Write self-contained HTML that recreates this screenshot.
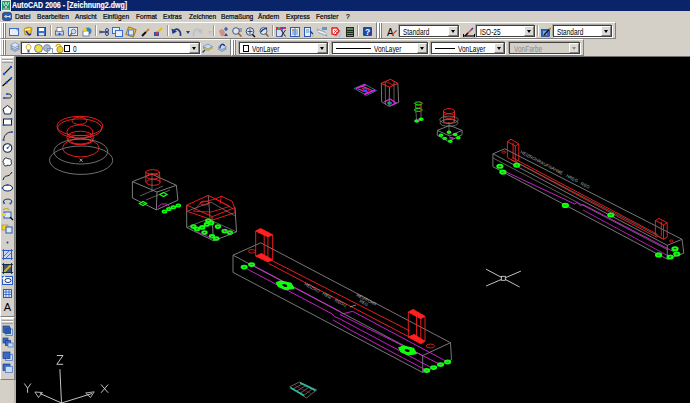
<!DOCTYPE html>
<html><head><meta charset="utf-8">
<style>
*{margin:0;padding:0;box-sizing:border-box}
html,body{width:690px;height:403px;overflow:hidden;background:#d4d0c8;font-family:"Liberation Sans",sans-serif;position:relative}
.a{position:absolute}
svg{overflow:visible}
#title{left:0;top:0;width:690px;height:11px;background:#0a246a}
#title .t{left:12px;top:0px;color:#fff;font-weight:bold;-webkit-text-stroke:0.15px #fff;font-size:9px;line-height:11px;white-space:nowrap;transform-origin:0 0;transform:scaleX(0.78)}
#menu{left:0;top:11px;width:690px;height:11px;background:#d4d0c8}
.m{top:1px;font-size:7.5px;line-height:10px;color:#000;-webkit-text-stroke:0.2px #000;white-space:nowrap;transform-origin:0 0;transform:scaleX(0.88)}
.tb{background:#d4d0c8;border-top:1px solid #fff;border-left:1px solid #fff;border-right:1px solid #808080;border-bottom:1px solid #808080}
.grip{width:2px;border-left:1px solid #fff;border-right:1px solid #808080}
.sep{width:2px;border-left:1px solid #9a988f;border-right:1px solid #fff}
.cb{background:#fff;border:1px solid #404040;box-shadow:1px 1px 0 #fff,-1px -1px 0 #a8a6a0}
.cbt{font-size:9px;line-height:10px;color:#000;white-space:nowrap;transform-origin:0 0;transform:scaleX(0.72)}
.arr{background:#dcdad4;border-top:1px solid #fff;border-left:1px solid #fff;border-right:1px solid #808080;border-bottom:1px solid #808080}
.arr i{position:absolute;left:2px;top:2.5px;width:0;height:0;border-left:2.5px solid transparent;border-right:2.5px solid transparent;border-top:3px solid #000}
#canvas{left:16px;top:56px;width:674px;height:347px;background:#000}
</style></head><body>
<div id="title" class="a">
<svg class="a" style="left:1px;top:0px" width="10" height="11" viewBox="0 0 10 11"><rect x="0.5" y="0.5" width="9" height="10" fill="#1a9a6a" stroke="#d8f0e8" stroke-width="1"/><path d="M2 2 L3.5 6 L5 2 M5 2 L6.5 6 L8 2" stroke="#c8f0d8" stroke-width="0.9" fill="none"/><circle cx="5" cy="7" r="1.5" fill="#e0e0e0" stroke="#404040" stroke-width="0.6"/><path d="M2 9 L8 9" stroke="#c8f0d8" stroke-width="0.8"/></svg>
<div class="a t">AutoCAD 2006 - [Zeichnung2.dwg]</div>
</div>
<div id="menu" class="a">
<svg class="a" style="left:2px;top:1px" width="10" height="9" viewBox="0 0 10 9"><rect x="0.5" y="0.5" width="9" height="8" rx="2" fill="#1a5ac0" stroke="#3a3a5a" stroke-width="0.8"/><path d="M2.5 4.5 L8 4.5" stroke="#d0e8ff" stroke-width="1.1"/><path d="M2 4.5 L4.5 2.5 L4.5 6.5 Z" fill="#e8c890"/><path d="M8 3 L8 6" stroke="#fff" stroke-width="0.8"/></svg>
<div class="a m" style="left:15px">Datei</div>
<div class="a m" style="left:37px">Bearbeiten</div>
<div class="a m" style="left:75px">Ansicht</div>
<div class="a m" style="left:103px">Einfügen</div>
<div class="a m" style="left:136px">Format</div>
<div class="a m" style="left:163px">Extras</div>
<div class="a m" style="left:189px">Zeichnen</div>
<div class="a m" style="left:221px">Bemaßung</div>
<div class="a m" style="left:258px">Ändern</div>
<div class="a m" style="left:286px">Express</div>
<div class="a m" style="left:316px">Fenster</div>
<div class="a m" style="left:346px">?</div>
</div>
<div class="a tb" style="left:0px;top:22px;width:377px;height:17px"></div>
<div class="a grip" style="left:2px;top:23px;height:15px"></div><div class="a grip" style="left:4px;top:23px;height:15px"></div>
<div class="a sep" style="left:50px;top:25px;height:11px"></div>
<div class="a sep" style="left:95px;top:25px;height:11px"></div>
<div class="a sep" style="left:167px;top:25px;height:11px"></div>
<div class="a sep" style="left:213px;top:25px;height:11px"></div>
<div class="a sep" style="left:272px;top:25px;height:11px"></div>
<div class="a sep" style="left:357px;top:25px;height:11px"></div>
<svg class="a" style="left:9px;top:28px" width="10" height="8" viewBox="0 0 10 8"><rect x="0.5" y="0.5" width="9" height="7" fill="#e8eef8" stroke="#3a6ec8"/><path d="M7 0.5 L9.5 3" stroke="#3a6ec8" fill="none"/></svg>
<svg class="a" style="left:23px;top:26px" width="10" height="10" viewBox="0 0 10 10"><path d="M1 3 L5 1 L9 2 L8 8 L2 9 Z" fill="#f0c030" stroke="#a08020" stroke-width="0.7"/><path d="M3 5 L6 9 L8 8" stroke="#1a3a9a" stroke-width="1.5" fill="none"/><path d="M2 4 L7 3" stroke="#fff" stroke-width="1"/></svg>
<svg class="a" style="left:37px;top:27px" width="9" height="9" viewBox="0 0 9 9"><rect x="0.5" y="0.5" width="8" height="8" fill="#3a70c8" stroke="#1a4a98"/><rect x="2" y="1" width="5" height="3" fill="#fff"/><rect x="2" y="6" width="5" height="2.5" fill="#dde"/></svg>
<svg class="a" style="left:55px;top:27px" width="9" height="9" viewBox="0 0 9 9"><rect x="0.5" y="4" width="8" height="4" fill="#c8d4e8" stroke="#3a5a98" stroke-width="0.8"/><rect x="2" y="0.5" width="5" height="4" fill="#fff" stroke="#555" stroke-width="0.6"/><circle cx="4.5" cy="7" r="1.2" fill="#2a5ab0"/></svg>
<svg class="a" style="left:68px;top:27px" width="10" height="10" viewBox="0 0 10 10"><rect x="0.5" y="0.5" width="9" height="8" fill="#e8eef8" stroke="#3a6ec8"/><circle cx="5.5" cy="4.5" r="2.3" fill="#cde" stroke="#3a6ec8" stroke-width="0.8"/><path d="M4 6 L1.5 9.5" stroke="#a05a20" stroke-width="1.3"/></svg>
<svg class="a" style="left:82px;top:27px" width="10" height="10" viewBox="0 0 10 10"><circle cx="6" cy="4" r="3.5" fill="#2a8ad0"/><rect x="1" y="4" width="6" height="5" fill="#fff" stroke="#3a5a98" stroke-width="0.7"/><circle cx="3" cy="3" r="2" fill="#f0d020"/></svg>
<svg class="a" style="left:99px;top:28px" width="10" height="8" viewBox="0 0 10 8"><path d="M0 3 L10 5 M0 5 L10 3" stroke="#2a3a6a" stroke-width="0.9"/><circle cx="8" cy="2" r="1.5" fill="none" stroke="#2a4a9a"/><circle cx="8" cy="6" r="1.5" fill="none" stroke="#2a4a9a"/></svg>
<svg class="a" style="left:112px;top:27px" width="11" height="10" viewBox="0 0 11 10"><rect x="0.5" y="0.5" width="7" height="6" fill="#e8eef8" stroke="#3a6ec8"/><rect x="3.5" y="3.5" width="7" height="6" fill="#e8eef8" stroke="#3a6ec8"/></svg>
<svg class="a" style="left:126px;top:27px" width="10" height="10" viewBox="0 0 10 10"><rect x="1" y="1" width="8" height="8" fill="#f0c040" stroke="#806020" stroke-width="0.7" transform="rotate(20 5 5)"/><rect x="2.5" y="3" width="5" height="5" fill="#dde8f8" stroke="#3a6ec8" stroke-width="0.8"/></svg>
<svg class="a" style="left:141px;top:28px" width="9" height="9" viewBox="0 0 9 9"><path d="M1 8 L5 4" stroke="#101010" stroke-width="2"/><path d="M5 4 L8 1" stroke="#c07020" stroke-width="1.6"/></svg>
<svg class="a" style="left:153px;top:26px" width="11" height="11" viewBox="0 0 11 11"><path d="M2 9 L9 2" stroke="#e0c020" stroke-width="2"/><rect x="1" y="6" width="5" height="4" fill="#2a5ab0"/><circle cx="4" cy="7" r="1.5" fill="#e03030"/></svg>
<svg class="a" style="left:171px;top:27px" width="11" height="10" viewBox="0 0 11 10"><path d="M9.5 9 C10 3 6 0.5 3 3.5" stroke="#1a3a8a" stroke-width="1.8" fill="none"/><path d="M0.5 1.5 L1.5 7 L6 4.5 Z" fill="#1a3a8a"/></svg>
<svg class="a" style="left:186px;top:31px" width="4" height="3" viewBox="0 0 4 3"><path d="M0 0 L4 0 L2 3 Z" fill="#1a3a8a"/></svg>
<svg class="a" style="left:192px;top:27px" width="11" height="10" viewBox="0 0 11 10"><path d="M1.5 9 C1 3 5 0.5 8 3.5" stroke="#b8c0cc" stroke-width="1.8" fill="none"/><path d="M10.5 1.5 L9.5 7 L5 4.5 Z" fill="#b8c0cc"/></svg>
<svg class="a" style="left:208px;top:31px" width="4" height="3" viewBox="0 0 4 3"><path d="M0 0 L4 0 L2 3 Z" fill="#b8c0cc"/></svg>
<svg class="a" style="left:218px;top:27px" width="11" height="10" viewBox="0 0 11 10"><path d="M1 4 C3 1 6 2 7 5 L6 9 L3 9 Z" fill="#d0908a"/><path d="M8 0 L8 4 M6 2 L10 2" stroke="#1a4ab0" stroke-width="1.2"/><path d="M6 9 L10 9 L8 6 Z" fill="#1a4ab0"/></svg>
<svg class="a" style="left:232px;top:27px" width="10" height="10" viewBox="0 0 10 10"><circle cx="4" cy="4" r="3.3" fill="#dde6f0" stroke="#3a4a6a" stroke-width="0.9"/><path d="M6 6 L9.5 9.5" stroke="#a05a20" stroke-width="1.5"/><path d="M7 2 L10 2 M7 4 L10 4" stroke="#2a5ab0" stroke-width="0.8"/></svg>
<svg class="a" style="left:245px;top:27px" width="11" height="11" viewBox="0 0 11 11"><circle cx="5" cy="4.5" r="3.8" fill="#dde6f0" stroke="#3a4a6a" stroke-width="1"/><path d="M5 2 L5 7 M2.5 4.5 L7.5 4.5" stroke="#1a3a8a" stroke-width="0.9"/><path d="M7.5 7.5 L10 10" stroke="#101010" stroke-width="1.5"/></svg>
<svg class="a" style="left:259px;top:27px" width="10" height="10" viewBox="0 0 10 10"><circle cx="4.5" cy="4" r="3.5" fill="#dde6f0" stroke="#3a4a6a" stroke-width="0.9"/><path d="M2 5 C3 2 6 2 8 1" stroke="#1a3a8a" stroke-width="1.4" fill="none"/><path d="M6.5 6.5 L9.5 9.5" stroke="#a05a20" stroke-width="1.5"/></svg>
<svg class="a" style="left:276px;top:27px" width="10" height="10" viewBox="0 0 10 10"><rect x="0" y="0" width="10" height="2" fill="#e02060"/><rect x="2" y="0" width="2" height="2" fill="#30c030"/><rect x="5" y="0" width="2" height="2" fill="#3050e0"/><rect x="0.5" y="2.5" width="6" height="7" fill="#dde" stroke="#3a5a98" stroke-width="0.8"/><path d="M5 3 L9.5 9.5 M9.5 3 L5 9.5" stroke="#202a40" stroke-width="1"/></svg>
<svg class="a" style="left:290px;top:27px" width="10" height="10" viewBox="0 0 10 10"><rect x="0.5" y="0.5" width="9" height="9" fill="#e8eef8" stroke="#2a5ab0" stroke-width="1"/><path d="M2 3 L8 3 M2 5 L8 5 M2 7 L8 7 M5 1 L5 9" stroke="#3a6ec8" stroke-width="0.8"/><rect x="2" y="2" width="2" height="2" fill="#d0a020"/></svg>
<svg class="a" style="left:304px;top:27px" width="10" height="10" viewBox="0 0 10 10"><rect x="0.5" y="0.5" width="6" height="9" fill="#e8eef8" stroke="#2a5ab0" stroke-width="1"/><path d="M2 3 L5 3 M2 5 L5 5" stroke="#3a6ec8" stroke-width="0.8"/><path d="M6 4 L9 7" stroke="#1a3a8a" stroke-width="1.2"/><circle cx="9" cy="9" r="0.8" fill="#d0b020"/></svg>
<svg class="a" style="left:317px;top:27px" width="10" height="10" viewBox="0 0 10 10"><path d="M0 2 L8 5 L10 9 L2 6 Z" fill="#c8d4e0" stroke="#7a8aa0" stroke-width="0.6"/><path d="M1 4 L9 7" stroke="#fff" stroke-width="0.8"/><rect x="5" y="0" width="5" height="3" fill="#5a9ad0"/></svg>
<svg class="a" style="left:331px;top:27px" width="10" height="10" viewBox="0 0 10 10"><rect x="3" y="3" width="7" height="7" fill="#b8c4d0"/><path d="M1 1 L6 1 L8 4 L5 8 L1 7 Z" fill="#fff" stroke="#e02020" stroke-width="1.4"/><path d="M3 3 L6 6 M6 3 L3 6" stroke="#e02020" stroke-width="0.8"/></svg>
<svg class="a" style="left:346px;top:27px" width="8" height="10" viewBox="0 0 8 10"><rect x="0" y="0" width="8" height="10" fill="#202820"/><rect x="1" y="1" width="6" height="2" fill="#5a8a5a"/><rect x="1" y="4" width="6" height="1" fill="#e04040"/><path d="M1 6.5 L7 6.5 M1 8.5 L7 8.5" stroke="#aaa" stroke-width="0.7"/></svg>
<svg class="a" style="left:363px;top:27px" width="9" height="9" viewBox="0 0 9 9"><rect x="0" y="0" width="9" height="9" rx="1" fill="#1a4aa8"/><text x="4.5" y="7.8" font-size="8.5" font-weight="bold" fill="#fff" text-anchor="middle" font-family="Liberation Sans">?</text></svg>
<div class="a tb" style="left:377px;top:22px;width:239px;height:17px"></div>
<div class="a grip" style="left:378px;top:23px;height:15px"></div><div class="a grip" style="left:380px;top:23px;height:15px"></div>
<div class="a sep" style="left:537px;top:25px;height:11px"></div>
<svg class="a" style="left:387px;top:27px" width="10" height="10" viewBox="0 0 10 10"><text x="0" y="8.5" font-size="10" font-family="Liberation Sans" fill="#000">A</text><path d="M5 8 L9.5 3.5" stroke="#d05020" stroke-width="1.2"/><path d="M8 5 L9.5 3.5" stroke="#3050d0" stroke-width="1"/></svg>
<div class="a cb" style="left:399px;top:25px;width:60px;height:12px;background:#fff"><div class="a cbt" style="left:3px;top:1px;color:#000">Standard</div><div class="a arr" style="right:0px;top:0px;width:10px;height:10px"><i style="border-top-color:#000"></i></div></div>
<svg class="a" style="left:463px;top:27px" width="12" height="10" viewBox="0 0 12 10"><path d="M0.5 9 L11.5 9" stroke="#000" stroke-width="1.2"/><path d="M0.5 7 L0.5 10 M11.5 7 L11.5 10" stroke="#000"/><path d="M3 8 L10 1" stroke="#d04040" stroke-width="1.2"/><path d="M8 3 L10 1" stroke="#2050d0" stroke-width="1.2"/><path d="M2 9 L5 6" stroke="#000" stroke-width="1.2"/></svg>
<div class="a cb" style="left:476px;top:25px;width:59px;height:12px;background:#fff"><div class="a cbt" style="left:3px;top:1px;color:#000">ISO-25</div><div class="a arr" style="right:0px;top:0px;width:10px;height:10px"><i style="border-top-color:#000"></i></div></div>
<svg class="a" style="left:541px;top:27px" width="10" height="10" viewBox="0 0 10 10"><rect x="0.5" y="2.5" width="8" height="7" fill="#2a6ac8" stroke="#1a3a8a" stroke-width="0.7"/><path d="M2 5 L6 5 M2 7 L6 7" stroke="#fff" stroke-width="0.8"/><path d="M3 8 L9.5 1" stroke="#101010" stroke-width="1.2"/><path d="M8 2.5 L9.5 1" stroke="#d0a020" stroke-width="1.2"/></svg>
<div class="a cb" style="left:553px;top:25px;width:59px;height:12px;background:#fff"><div class="a cbt" style="left:3px;top:1px;color:#000">Standard</div><div class="a arr" style="right:0px;top:0px;width:10px;height:10px"><i style="border-top-color:#000"></i></div></div>
<div class="a tb" style="left:0px;top:39px;width:231px;height:17px"></div>
<div class="a grip" style="left:2px;top:40px;height:15px"></div><div class="a grip" style="left:4px;top:40px;height:15px"></div>
<svg class="a" style="left:10px;top:43px" width="10" height="10" viewBox="0 0 10 10"><path d="M0.5 6 L5 8.5 L9.5 6 L5 3.5 Z" fill="#a8c0e0" stroke="#5a7ab0" stroke-width="0.6"/><path d="M0.5 4 L5 6.5 L9.5 4 L5 1.5 Z" fill="#c8d8f0" stroke="#5a7ab0" stroke-width="0.6"/><path d="M0.5 2 L5 4.5 L9.5 2 L5 -0.5 Z" fill="#dde8f8" stroke="#5a7ab0" stroke-width="0.6"/></svg>
<div class="a cb" style="left:21px;top:42px;width:179px;height:12px;background:#fff"><svg class="a" style="left:3px;top:1px" width="7" height="9" viewBox="0 0 7 9"><path d="M3.5 0.5 C6 0.5 6.5 3 5.5 4.5 L4.5 6 L2.5 6 L1.5 4.5 C0.5 3 1 0.5 3.5 0.5 Z" fill="#fff8c0" stroke="#b09020" stroke-width="0.7"/><rect x="2.5" y="6" width="2" height="2.5" fill="#3a5aa0"/></svg><svg class="a" style="left:12px;top:1px" width="9" height="9" viewBox="0 0 9 9"><circle cx="4.5" cy="4.5" r="4" fill="#f0e040" stroke="#3a6ab0" stroke-width="0.8"/></svg><svg class="a" style="left:21px;top:1px" width="10" height="10" viewBox="0 0 10 10"><circle cx="4" cy="4" r="3.5" fill="#b0b8c8" stroke="#6a7a9a" stroke-width="0.7"/><rect x="4.5" y="4.5" width="5" height="5" fill="none" stroke="#6a8ac0" stroke-width="0.8"/></svg><svg class="a" style="left:32px;top:0px" width="10" height="10" viewBox="0 0 10 10"><path d="M2 4 C2 0.5 7 0.5 7 4" stroke="#d0b020" stroke-width="1.2" fill="none"/><circle cx="6" cy="6.5" r="3.2" fill="#e8d030" stroke="#908020" stroke-width="0.7"/></svg><div class="a" style="left:42px;top:2px;width:6px;height:7px;border:1px solid #000;background:#fff"></div><div class="a cbt" style="left:51px;top:1px">0</div><div class="a arr" style="right:0px;top:0px;width:10px;height:10px"><i style="border-top-color:#000"></i></div></div>
<svg class="a" style="left:202px;top:43px" width="11" height="10" viewBox="0 0 11 10"><path d="M1 5 L6 7.5 L10.5 5 L6 2.5 Z" fill="#f0d030" stroke="#9a8020" stroke-width="0.6"/><path d="M1 3.5 L6 6 L10.5 3.5 L6 1 Z" fill="#c8d8f0" stroke="#5a7ab0" stroke-width="0.6"/><path d="M0.5 9.5 L3 7" stroke="#1a3a8a" stroke-width="1.2"/></svg>
<svg class="a" style="left:217px;top:43px" width="10" height="10" viewBox="0 0 10 10"><path d="M1 6 L5 8.5 L9.5 6 L5 3.5 Z" fill="#a8c0e0" stroke="#5a7ab0" stroke-width="0.6"/><path d="M1 4 L5 6.5 L9.5 4 L5 1.5 Z" fill="#c8d8f0" stroke="#5a7ab0" stroke-width="0.6"/><path d="M3 5 C3 1 7 0 7.5 3" stroke="#1a3a8a" stroke-width="1.3" fill="none"/></svg>
<div class="a tb" style="left:231px;top:39px;width:353px;height:17px"></div>
<div class="a grip" style="left:232px;top:40px;height:15px"></div><div class="a grip" style="left:234px;top:40px;height:15px"></div>
<div class="a cb" style="left:239px;top:42px;width:89px;height:12px;background:#fff"><div class="a" style="left:3px;top:2px;width:6px;height:7px;border:1px solid #000;background:#fff"></div><div class="a cbt" style="left:12px;top:1px;color:#000">VonLayer</div><div class="a arr" style="right:0px;top:0px;width:10px;height:10px"><i style="border-top-color:#000"></i></div></div>
<div class="a cb" style="left:332px;top:42px;width:96px;height:12px;background:#fff"><div class="a" style="left:3px;top:5px;width:35px;height:1px;background:#000"></div><div class="a cbt" style="left:41px;top:1px;color:#000">VonLayer</div><div class="a arr" style="right:0px;top:0px;width:10px;height:10px"><i style="border-top-color:#000"></i></div></div>
<div class="a cb" style="left:431px;top:42px;width:74px;height:12px;background:#fff"><div class="a" style="left:3px;top:5px;width:20px;height:1px;background:#000"></div><div class="a cbt" style="left:26px;top:1px;color:#000">VonLayer</div><div class="a arr" style="right:0px;top:0px;width:10px;height:10px"><i style="border-top-color:#000"></i></div></div>
<div class="a cb" style="left:509px;top:42px;width:71px;height:12px;background:#d4d0c8"><div class="a cbt" style="left:4px;top:1px;color:#8c8c8c">VonFarbe</div><div class="a arr" style="right:0px;top:0px;width:10px;height:10px"><i style="border-top-color:#8c8c8c"></i></div></div>
<div id="canvas" class="a"></div>
<div class="a" style="left:15px;top:56px;width:675px;height:1px;background:#6e6e6e"></div>
<div class="a" style="left:15px;top:56px;width:1px;height:347px;background:#8e8c88"></div>
<div class="a tb" style="left:0px;top:56px;width:15px;height:261px"></div>
<div class="a" style="left:2px;top:57px;width:11px;height:3px;border-top:1px solid #fff;border-bottom:1px solid #a0a0a0"></div><div class="a" style="left:2px;top:60px;width:11px;height:3px;border-top:1px solid #fff;border-bottom:1px solid #a0a0a0"></div>
<div class="a tb" style="left:0px;top:317px;width:15px;height:63px"></div>
<div class="a" style="left:2px;top:318px;width:11px;height:3px;border-top:1px solid #fff;border-bottom:1px solid #a0a0a0"></div><div class="a" style="left:2px;top:321px;width:11px;height:3px;border-top:1px solid #fff;border-bottom:1px solid #a0a0a0"></div>
<div class="a" style="left:14px;top:380px;width:2px;height:23px;background:#b8b4ac"></div>
<svg class="a" style="left:1px;top:65px" width="13" height="13" viewBox="0 0 13 13"><path d="M3 9 L10 2" stroke="#102040" stroke-width="1.1"/><circle cx="3" cy="9" r="1.2" fill="#1a5ae0"/><circle cx="10" cy="2" r="1.2" fill="#1a5ae0"/></svg>
<svg class="a" style="left:1px;top:76px" width="13" height="13" viewBox="0 0 13 13"><path d="M1.5 10 L11 1.5" stroke="#000" stroke-width="1.1"/><circle cx="5.5" cy="6.5" r="1.2" fill="#1a5ae0"/><circle cx="10" cy="2.5" r="1.1" fill="#1a5ae0"/></svg>
<svg class="a" style="left:1px;top:90px" width="13" height="13" viewBox="0 0 13 13"><path d="M3 8 L8.5 8 C11 8 11 4 8 4 L6 4" stroke="#102040" stroke-width="1" fill="none"/><circle cx="3" cy="8" r="1.1" fill="#1a5ae0"/><circle cx="6" cy="4" r="1.1" fill="#1a5ae0"/></svg>
<svg class="a" style="left:1px;top:104px" width="13" height="13" viewBox="0 0 13 13"><path d="M6.5 1.5 L11 5 L9.5 10 L3.5 10 L2 5 Z" stroke="#102040" stroke-width="1" fill="#fff"/></svg>
<svg class="a" style="left:1px;top:116px" width="13" height="13" viewBox="0 0 13 13"><rect x="2.5" y="3" width="8" height="6" stroke="#102040" stroke-width="1" fill="#fff"/><circle cx="2.5" cy="9" r="1.1" fill="#1a5ae0"/><circle cx="10.5" cy="3" r="1.1" fill="#1a5ae0"/></svg>
<svg class="a" style="left:1px;top:130px" width="13" height="13" viewBox="0 0 13 13"><path d="M2.5 10.5 C3 5 6 2 11 2" stroke="#102040" stroke-width="1" fill="none"/><circle cx="2.5" cy="10" r="1.1" fill="#1a5ae0"/><circle cx="11" cy="2" r="1.1" fill="#1a5ae0"/></svg>
<svg class="a" style="left:1px;top:142px" width="13" height="13" viewBox="0 0 13 13"><circle cx="6.5" cy="6" r="4.3" stroke="#102040" stroke-width="1.1" fill="#fff"/><path d="M6.5 6 L9.5 3" stroke="#102040" stroke-width="0.9"/><circle cx="6.5" cy="6" r="1" fill="#1a5ae0"/></svg>
<svg class="a" style="left:1px;top:156px" width="13" height="13" viewBox="0 0 13 13"><path d="M3 4 C3 1.5 6 1.5 7 3 C9 2 11 4 10 6 C11.5 8 9 10.5 7 9 C5 11 2 9.5 3 7.5 C1.5 6.5 2 4.5 3 4 Z" stroke="#102040" stroke-width="1" fill="#fff"/></svg>
<svg class="a" style="left:1px;top:170px" width="13" height="13" viewBox="0 0 13 13"><path d="M2 10 C4 3 7 9 11 2" stroke="#102040" stroke-width="1" fill="none"/></svg>
<svg class="a" style="left:1px;top:182px" width="13" height="13" viewBox="0 0 13 13"><ellipse cx="6.5" cy="6" rx="5" ry="3" stroke="#102040" stroke-width="1" fill="#fff"/><circle cx="6.5" cy="3" r="1.1" fill="#1a5ae0"/><circle cx="1.5" cy="6" r="1" fill="#1a5ae0"/></svg>
<svg class="a" style="left:1px;top:196px" width="13" height="13" viewBox="0 0 13 13"><path d="M3 7 C1 4 5 3 7.5 3.2 C10.5 3.5 12 5.5 9.5 7.5" stroke="#102040" stroke-width="1" fill="none"/><circle cx="3" cy="7" r="1.1" fill="#1a5ae0"/><circle cx="9.5" cy="7.5" r="1.1" fill="#1a5ae0"/></svg>
<svg class="a" style="left:1px;top:208px" width="13" height="13" viewBox="0 0 13 13"><rect x="3" y="4" width="7" height="6" stroke="#2a5ab0" stroke-width="1" fill="#dde8f8"/><path d="M2 2 C4 0 7 0 8 2" stroke="#c0a020" stroke-width="1.2" fill="none"/><rect x="1" y="5" width="4" height="3" fill="#f0d030"/><path d="M9 9 L12 12" stroke="#000" stroke-width="1.2"/></svg>
<svg class="a" style="left:1px;top:222px" width="13" height="13" viewBox="0 0 13 13"><rect x="1" y="3" width="6" height="5" fill="#f0d030" stroke="#a08020" stroke-width="0.6"/><rect x="5" y="5" width="6" height="6" stroke="#2a5ab0" stroke-width="1" fill="#dde8f8"/></svg>
<svg class="a" style="left:1px;top:236px" width="13" height="13" viewBox="0 0 13 13"><circle cx="6.5" cy="6.5" r="1" fill="#1a3ab0"/></svg>
<svg class="a" style="left:1px;top:248px" width="13" height="13" viewBox="0 0 13 13"><rect x="2.5" y="2.5" width="8" height="8" stroke="#2a5ac8" stroke-width="1" fill="#c8d8f0"/><path d="M3 8 L8 3 M5 10 L10 5" stroke="#2a5ac8" stroke-width="0.8"/><path d="M1 2.5 L12 2.5 M1 10.5 L12 10.5 M2.5 1 L2.5 12 M10.5 1 L10.5 12" stroke="#2a5ac8" stroke-width="0.8"/></svg>
<svg class="a" style="left:1px;top:262px" width="13" height="13" viewBox="0 0 13 13"><rect x="2.5" y="2.5" width="8" height="8" stroke="#1a2a40" stroke-width="1" fill="#3a5a8a"/><path d="M3 10 L10 3" stroke="#d0b030" stroke-width="2"/><path d="M1 2.5 L12 2.5 M1 10.5 L12 10.5 M2.5 1 L2.5 12 M10.5 1 L10.5 12" stroke="#1a2a40" stroke-width="0.9"/></svg>
<svg class="a" style="left:1px;top:274px" width="13" height="13" viewBox="0 0 13 13"><rect x="1.5" y="2.5" width="10" height="8" stroke="#2a5ac8" stroke-width="1" fill="#e0ecf8"/><ellipse cx="7" cy="6.5" rx="3" ry="2" stroke="#2a3a6a" stroke-width="1" fill="#fff"/><path d="M1.5 5 L4 2.5" stroke="#fff" stroke-width="1.5"/></svg>
<svg class="a" style="left:1px;top:287px" width="13" height="13" viewBox="0 0 13 13"><rect x="2.5" y="2.5" width="8" height="8" stroke="#2a5ac8" stroke-width="1" fill="#dde8f8"/><path d="M2.5 5 L10.5 5 M2.5 7.5 L10.5 7.5 M5 2.5 L5 10.5 M8 2.5 L8 10.5" stroke="#2a5ac8" stroke-width="0.8"/></svg>
<svg class="a" style="left:1px;top:300px" width="13" height="13" viewBox="0 0 13 13"><text x="6.5" y="10.5" font-size="11" font-family="Liberation Sans" text-anchor="middle" fill="#000">A</text></svg>
<svg class="a" style="left:1px;top:324px" width="13" height="13" viewBox="0 0 13 13"><rect x="5" y="5" width="6.5" height="6.5" fill="#c8dcf4" stroke="#4a7ad0" stroke-width="0.8"/><rect x="2" y="2" width="6.5" height="6.5" fill="#3a6ac0" stroke="#1a3a8a" stroke-width="0.7"/><rect x="3.5" y="3.5" width="6.5" height="6.5" fill="#2a5aa0" /></svg>
<svg class="a" style="left:1px;top:336px" width="13" height="13" viewBox="0 0 13 13"><rect x="2" y="2" width="5" height="5" fill="#3a6ac0" stroke="#1a3a8a" stroke-width="0.7"/><rect x="4.5" y="4.5" width="5" height="5" fill="#3a6ac0" stroke="#1a3a8a" stroke-width="0.7"/><rect x="7" y="7" width="5" height="4" fill="#c8dcf4" stroke="#4a7ad0" stroke-width="0.8"/></svg>
<svg class="a" style="left:1px;top:350px" width="13" height="13" viewBox="0 0 13 13"><rect x="4.5" y="4.5" width="7" height="6" fill="#c8dcf4" stroke="#4a7ad0" stroke-width="0.8"/><rect x="2" y="2" width="7" height="6.5" fill="#3a6ac0" stroke="#1a3a8a" stroke-width="0.7"/></svg>
<svg class="a" style="left:1px;top:362px" width="13" height="13" viewBox="0 0 13 13"><rect x="2" y="2" width="7" height="6.5" fill="#3a6ac0" stroke="#1a3a8a" stroke-width="0.7"/><rect x="4.5" y="4.5" width="7" height="6" fill="#c8dcf4" stroke="#4a7ad0" stroke-width="0.8"/></svg>
<svg class="a" style="left:0;top:0" width="690" height="403" viewBox="0 0 690 403"><ellipse cx="79.9" cy="126" rx="22.9" ry="9.7" stroke="#ff2020" stroke-width="0.9" fill="none"/>
<ellipse cx="79.6" cy="128.4" rx="22" ry="9.5" stroke="#ff2020" stroke-width="0.9" fill="none"/>
<ellipse cx="79.4" cy="120.8" rx="7.4" ry="3.6" stroke="#ff2020" stroke-width="0.9" fill="none"/>
<ellipse cx="79.9" cy="131.9" rx="13" ry="7" stroke="#ff2020" stroke-width="0.9" fill="none"/>
<ellipse cx="80.3" cy="137.6" rx="13.4" ry="6.4" stroke="#ff2020" stroke-width="0.9" fill="none"/>
<ellipse cx="80.3" cy="140" rx="12.5" ry="4.7" stroke="#ff2020" stroke-width="0.9" fill="none"/>
<ellipse cx="80.8" cy="147.9" rx="18.2" ry="9" stroke="#ff2020" stroke-width="0.9" fill="none"/>
<ellipse cx="80.8" cy="151.5" rx="26.9" ry="12.5" stroke="#7c7c7c" stroke-width="0.9" fill="none"/>
<ellipse cx="81.1" cy="160.2" rx="31.6" ry="14.2" stroke="#7c7c7c" stroke-width="0.9" fill="none"/>
<path d="M79.6 158.6 L82.6 161.8" stroke="#d8d8d8" stroke-width="0.7" fill="none"/>
<path d="M82.6 158.6 L79.6 161.8" stroke="#d8d8d8" stroke-width="0.7" fill="none"/>
<path d="M132.4 181.6 L151.8 174.1 L176.4 185.3 L157.0 192.0 L132.4 181.6" stroke="#7c7c7c" stroke-width="1.0" fill="none"/>
<path d="M132.4 181.6 L132.4 198.0 L156.3 209.9 L177.9 200.2 L176.4 185.3" stroke="#7c7c7c" stroke-width="1.0" fill="none"/>
<path d="M157.0 192.0 L156.3 209.9" stroke="#7c7c7c" stroke-width="1.0" fill="none"/>
<path d="M140.0 196.0 L163.0 186.0" stroke="#7c7c7c" stroke-width="0.75" fill="none"/>
<path d="M146.0 200.0 L170.0 190.0" stroke="#7c7c7c" stroke-width="0.75" fill="none"/>
<ellipse cx="152.5" cy="171.9" rx="6.7" ry="2.2" stroke="#ff2020" stroke-width="0.9" fill="none"/>
<ellipse cx="152.8" cy="176.5" rx="6.7" ry="2.5" stroke="#ff2020" stroke-width="0.9" fill="none"/>
<ellipse cx="153.3" cy="182.3" rx="6.9" ry="3" stroke="#ff2020" stroke-width="0.9" fill="none"/>
<path d="M145.8 172.0 L145.8 182.5" stroke="#ff2020" stroke-width="0.9" fill="none"/>
<path d="M159.5 172.0 L160.0 182.5" stroke="#ff2020" stroke-width="0.9" fill="none"/>
<path d="M152.0 173.0 L152.0 192.0" stroke="#7c7c7c" stroke-width="0.75" fill="none"/>
<path d="M139.5 203.5 L143.0 201.5 L146.5 203.5 L143.0 205.5 Z" stroke="#10ff10" stroke-width="1.3" fill="none"/>
<path d="M160.0 194.5 L163.5 192.5 L167.0 194.5 L163.5 196.5 Z" stroke="#10ff10" stroke-width="1.3" fill="none"/>
<ellipse cx="164.5" cy="211.4" rx="2" ry="1.2" stroke="#10ff10" stroke-width="1.6" fill="none"/>
<ellipse cx="168.9" cy="209.1" rx="2" ry="1.2" stroke="#10ff10" stroke-width="1.6" fill="none"/>
<ellipse cx="173.4" cy="207.3" rx="2" ry="1.2" stroke="#10ff10" stroke-width="1.6" fill="none"/>
<ellipse cx="178.3" cy="205.4" rx="2" ry="1.2" stroke="#10ff10" stroke-width="1.6" fill="none"/>
<path d="M157.8 206.9 L161.5 204.0 L167.0 204.0 L169.7 206.9" stroke="#e020e0" stroke-width="0.9" fill="none"/>
<path d="M186.7 205.1 L186.7 227.4 L213.5 240.8 L236.5 231.9 L235.0 207.3" stroke="#7c7c7c" stroke-width="1.0" fill="none"/>
<path d="M212.0 217.0 L213.5 240.8" stroke="#7c7c7c" stroke-width="1.0" fill="none"/>
<path d="M208.3 195.4 L210.0 218.0" stroke="#7c7c7c" stroke-width="0.85" fill="none"/>
<path d="M186.7 227.4 L208.0 219.0 L236.5 231.9" stroke="#7c7c7c" stroke-width="0.75" fill="none"/>
<path d="M186.9 205.1 L208.2 195.3 L215.5 199.0 L221.3 196.1 L232.3 201.4 L234.8 208.4 L235.2 212.5" stroke="#ff2020" stroke-width="0.9" fill="none"/>
<path d="M186.9 205.1 L186.9 211.2 L212.7 220.0 L235.2 212.5" stroke="#ff2020" stroke-width="0.9" fill="none"/>
<path d="M186.9 205.1 L212.3 216.6 L234.0 208.0" stroke="#ff2020" stroke-width="0.9" fill="none"/>
<path d="M193.4 211.2 L200.8 202.6 L215.5 199.0 L229.9 206.3 L211.0 212.1 L193.4 211.2" stroke="#ff2020" stroke-width="0.8" fill="none"/>
<ellipse cx="204.5" cy="203.1" rx="4.5" ry="2" stroke="#ff2020" stroke-width="0.8" fill="none"/>
<path d="M215.5 199.0 L233.1 208.8" stroke="#ff2020" stroke-width="0.8" fill="none"/>
<path d="M220.0 204.0 L221.3 196.1" stroke="#ff2020" stroke-width="0.8" fill="none"/>
<path d="M188.0 210.8 L211.0 202.2 L234.8 215.8" stroke="#7c7c7c" stroke-width="0.75" fill="none"/>
<ellipse cx="193.4" cy="226.6" rx="2.2" ry="1.3" stroke="#10ff10" stroke-width="2.0" fill="none"/>
<ellipse cx="197.1" cy="228.9" rx="2.2" ry="1.3" stroke="#10ff10" stroke-width="2.0" fill="none"/>
<ellipse cx="202.3" cy="227.4" rx="2.2" ry="1.3" stroke="#10ff10" stroke-width="2.0" fill="none"/>
<ellipse cx="206.8" cy="224.4" rx="2.2" ry="1.3" stroke="#10ff10" stroke-width="2.0" fill="none"/>
<ellipse cx="208.3" cy="220.7" rx="2.2" ry="1.3" stroke="#10ff10" stroke-width="2.0" fill="none"/>
<ellipse cx="211.2" cy="222.9" rx="2.2" ry="1.3" stroke="#10ff10" stroke-width="2.0" fill="none"/>
<ellipse cx="217.9" cy="226.6" rx="2.2" ry="1.3" stroke="#10ff10" stroke-width="2.0" fill="none"/>
<ellipse cx="224.6" cy="231.1" rx="2.2" ry="1.3" stroke="#10ff10" stroke-width="2.0" fill="none"/>
<ellipse cx="229.8" cy="232.6" rx="2.2" ry="1.3" stroke="#10ff10" stroke-width="2.0" fill="none"/>
<ellipse cx="204.5" cy="232.6" rx="2.2" ry="1.3" stroke="#10ff10" stroke-width="2.0" fill="none"/>
<ellipse cx="212" cy="236.3" rx="2.2" ry="1.3" stroke="#10ff10" stroke-width="2.0" fill="none"/>
<ellipse cx="216.4" cy="238.5" rx="2.2" ry="1.3" stroke="#10ff10" stroke-width="2.0" fill="none"/>
<path d="M195.0 231.0 L212.0 238.0" stroke="#e020e0" stroke-width="0.7" fill="none"/>
<path d="M222.0 229.0 L232.0 234.0" stroke="#e020e0" stroke-width="0.7" fill="none"/>
<path d="M354.3 88.5 L364.3 84.1 L376.5 90.6 L366.5 95.4 Z" stroke="#20a0a0" stroke-width="0.8" fill="none"/>
<path d="M356.0 88.5 L366.0 84.5" stroke="#e020e0" stroke-width="1.6" fill="none"/>
<path d="M364.0 94.5 L375.0 90.0" stroke="#e020e0" stroke-width="1.6" fill="none"/>
<path d="M358.0 89.0 L369.0 93.0" stroke="#e020e0" stroke-width="1.2" fill="none"/>
<path d="M362.0 86.0 L373.0 91.0" stroke="#e020e0" stroke-width="1.2" fill="none"/>
<ellipse cx="365.2" cy="89.8" rx="4.3" ry="1.7" stroke="#ff2020" stroke-width="0.9" fill="none"/>
<ellipse cx="365.2" cy="89.8" rx="1.8" ry="0.9" stroke="#2050ff" stroke-width="1.2" fill="none"/>
<path d="M381.3 83.3 L390.4 79.3 L397.8 83.3 L389.5 87.2 L381.3 83.3" stroke="#ff2020" stroke-width="1.0" fill="none"/>
<path d="M385.5 81.4 L393.8 85.3" stroke="#ff2020" stroke-width="0.8" fill="none"/>
<path d="M381.3 83.3 L381.7 101.9" stroke="#7c7c7c" stroke-width="0.9500000000000001" fill="none"/>
<path d="M397.8 83.3 L398.7 102.4" stroke="#7c7c7c" stroke-width="0.9500000000000001" fill="none"/>
<path d="M389.5 87.2 L389.1 106.3" stroke="#7c7c7c" stroke-width="0.9500000000000001" fill="none"/>
<path d="M385.2 82.0 L385.5 104.0" stroke="#7c7c7c" stroke-width="0.75" fill="none"/>
<path d="M394.0 81.5 L394.0 104.0" stroke="#7c7c7c" stroke-width="0.75" fill="none"/>
<path d="M381.7 101.9 L389.1 106.3 L398.7 102.4" stroke="#7c7c7c" stroke-width="0.9500000000000001" fill="none"/>
<path d="M384.0 102.0 L390.0 99.0 L396.0 103.0 L390.0 106.0" stroke="#e020e0" stroke-width="1.3" fill="none"/>
<ellipse cx="389.5" cy="103" rx="2" ry="1" stroke="#20c0a0" stroke-width="1" fill="none"/>
<ellipse cx="418.4" cy="103.4" rx="4" ry="1.5" stroke="#10ff10" stroke-width="1.0" fill="none"/>
<ellipse cx="418.4" cy="109.9" rx="4" ry="1.5" stroke="#10ff10" stroke-width="1.0" fill="none"/>
<path d="M415.5 102.0 L415.5 112.4" stroke="#ff2020" stroke-width="0.9" fill="none"/>
<path d="M421.1 102.0 L421.1 112.4" stroke="#ff2020" stroke-width="0.9" fill="none"/>
<ellipse cx="418.4" cy="106.5" rx="3" ry="1.2" stroke="#ff2020" stroke-width="0.8" fill="none"/>
<path d="M416.0 112.0 L416.5 120.0" stroke="#7c7c7c" stroke-width="0.75" fill="none"/>
<path d="M421.0 112.0 L421.0 119.0" stroke="#7c7c7c" stroke-width="0.75" fill="none"/>
<ellipse cx="416.8" cy="121" rx="1.8" ry="0.9" stroke="#10ff10" stroke-width="1.7" fill="none"/>
<ellipse cx="421.1" cy="119.2" rx="1.8" ry="0.9" stroke="#10ff10" stroke-width="1.7" fill="none"/>
<path d="M418.0 120.0 L420.0 121.0" stroke="#e020e0" stroke-width="1.2" fill="none"/>
<ellipse cx="449" cy="111.1" rx="5.5" ry="2.5" stroke="#ff2020" stroke-width="0.9" fill="none"/>
<path d="M443.5 111.0 L443.5 122.0" stroke="#ff2020" stroke-width="0.9" fill="none"/>
<path d="M454.5 111.0 L454.5 122.0" stroke="#ff2020" stroke-width="0.9" fill="none"/>
<ellipse cx="449" cy="116" rx="5.5" ry="2.2" stroke="#ff2020" stroke-width="0.8" fill="none"/>
<ellipse cx="449" cy="121" rx="5.6" ry="2.2" stroke="#ff2020" stroke-width="0.9" fill="none"/>
<ellipse cx="449" cy="119.8" rx="9.3" ry="3.7" stroke="#7c7c7c" stroke-width="0.8" fill="none"/>
<ellipse cx="449" cy="122.9" rx="9" ry="3.4" stroke="#7c7c7c" stroke-width="0.8" fill="none"/>
<path d="M437.3 130.4 L449.7 125.4 L462.1 130.4 L449.7 136.0 L437.3 130.4" stroke="#7c7c7c" stroke-width="0.9500000000000001" fill="none"/>
<path d="M437.3 130.4 L437.3 135.3 L448.4 141.5 L462.1 134.7 L462.1 130.4" stroke="#7c7c7c" stroke-width="0.9500000000000001" fill="none"/>
<path d="M449.0 122.0 L449.0 136.0" stroke="#7c7c7c" stroke-width="0.75" fill="none"/>
<ellipse cx="441" cy="135.3" rx="1.6" ry="0.9" stroke="#10ff10" stroke-width="1.6" fill="none"/>
<ellipse cx="444.7" cy="138.4" rx="1.6" ry="0.9" stroke="#10ff10" stroke-width="1.6" fill="none"/>
<ellipse cx="449" cy="132.2" rx="1.6" ry="0.9" stroke="#10ff10" stroke-width="1.6" fill="none"/>
<ellipse cx="455.2" cy="134.5" rx="1.6" ry="0.9" stroke="#10ff10" stroke-width="1.6" fill="none"/>
<ellipse cx="458.3" cy="137.8" rx="1.6" ry="0.9" stroke="#10ff10" stroke-width="1.6" fill="none"/>
<ellipse cx="450.3" cy="141.2" rx="1.6" ry="0.9" stroke="#10ff10" stroke-width="1.6" fill="none"/>
<path d="M449.5 137.5 L453.5 138.3" stroke="#e020e0" stroke-width="1.5" fill="none"/>
<path d="M492.9 153.8 L504.8 148.8 L682.0 239.3 L667.3 245.3 L492.9 153.8" stroke="#7c7c7c" stroke-width="0.9500000000000001" fill="none"/>
<path d="M492.9 153.8 L492.9 166.7 L667.3 259.2 L683.8 253.2 L682.0 239.3" stroke="#7c7c7c" stroke-width="0.9500000000000001" fill="none"/>
<path d="M667.3 245.3 L667.3 259.2" stroke="#7c7c7c" stroke-width="0.9500000000000001" fill="none"/>
<path d="M493.0 158.0 L668.0 250.0" stroke="#7c7c7c" stroke-width="0.75" fill="none"/>
<path d="M512.0 157.5 L657.7 234.5" stroke="#ff2020" stroke-width="0.9" fill="none"/>
<path d="M511.0 159.5 L657.2 237.5" stroke="#ff2020" stroke-width="0.9" fill="none"/>
<path d="M520.0 164.0 L662.0 238.0" stroke="#7c7c7c" stroke-width="0.65" fill="none"/>
<path d="M503.0 170.5 L574.7 204.0 L577.0 202.5 L580.0 205.5 L583.0 204.5 L674.6 252.2" stroke="#e020e0" stroke-width="0.9" fill="none"/>
<path d="M583.0 210.0 L668.4 256.0" stroke="#e020e0" stroke-width="0.8" fill="none"/>
<path d="M507.4 141.5 L511.0 139.2 L518.8 143.9 L515.3 146.0 L507.4 141.5" stroke="#ff2020" stroke-width="0.9" fill="none"/>
<path d="M507.4 141.5 L507.4 157.5" stroke="#ff2020" stroke-width="0.9" fill="none"/>
<path d="M518.8 143.9 L518.8 159.9" stroke="#ff2020" stroke-width="0.9" fill="none"/>
<path d="M515.3 146.0 L515.3 162.0" stroke="#ff2020" stroke-width="0.9" fill="none"/>
<path d="M513.1 142.7 L513.1 158.7" stroke="#ff2020" stroke-width="0.9" fill="none"/>
<path d="M507.4 157.5 L515.3 162.0 L518.8 159.9" stroke="#ff2020" stroke-width="0.9" fill="none"/>
<path d="M655.4 220.5 L659.0 218.4 L667.2 222.8 L663.5 224.8 L655.4 220.5" stroke="#ff2020" stroke-width="0.9" fill="none"/>
<path d="M655.4 220.5 L655.4 235.0" stroke="#ff2020" stroke-width="0.9" fill="none"/>
<path d="M667.2 222.8 L667.2 237.3" stroke="#ff2020" stroke-width="0.9" fill="none"/>
<path d="M663.5 224.8 L663.5 239.3" stroke="#ff2020" stroke-width="0.9" fill="none"/>
<path d="M661.3 221.7 L661.3 236.2" stroke="#ff2020" stroke-width="0.9" fill="none"/>
<path d="M655.4 235.0 L663.5 239.3 L667.2 237.3" stroke="#ff2020" stroke-width="0.9" fill="none"/>
<ellipse cx="503.8" cy="152.2" rx="1.8" ry="1" stroke="#ff2020" stroke-width="0.8" fill="none"/>
<ellipse cx="671.3" cy="241" rx="1.8" ry="1" stroke="#ff2020" stroke-width="0.8" fill="none"/>
<text x="520" y="153" font-size="4.4" fill="#b4b4b4" font-family="Liberation Sans" transform="rotate(27.5 520 153)">HEIZROHRAUFNAHME · HREG · REG</text>
<ellipse cx="499.9" cy="166.3" rx="2.6" ry="1.5" stroke="#10ff10" stroke-width="2.1" fill="none"/>
<ellipse cx="502.9" cy="172.1" rx="2.6" ry="1.5" stroke="#10ff10" stroke-width="2.1" fill="none"/>
<ellipse cx="516.7" cy="165.1" rx="2.6" ry="1.5" stroke="#10ff10" stroke-width="2.1" fill="none"/>
<ellipse cx="565.4" cy="205.4" rx="2.6" ry="1.5" stroke="#10ff10" stroke-width="2.1" fill="none"/>
<ellipse cx="610.8" cy="215" rx="2.6" ry="1.5" stroke="#10ff10" stroke-width="2.1" fill="none"/>
<ellipse cx="658.6" cy="254.9" rx="2.6" ry="1.5" stroke="#10ff10" stroke-width="2.1" fill="none"/>
<ellipse cx="675" cy="248.8" rx="2.6" ry="1.5" stroke="#10ff10" stroke-width="2.1" fill="none"/>
<ellipse cx="676.8" cy="254" rx="2.6" ry="1.5" stroke="#10ff10" stroke-width="2.1" fill="none"/>
<ellipse cx="670.2" cy="257" rx="2.6" ry="1.5" stroke="#10ff10" stroke-width="2.1" fill="none"/>
<path d="M233.0 255.2 L260.7 242.8 L450.5 342.7 L422.7 355.6 L233.0 255.2" stroke="#7c7c7c" stroke-width="0.9500000000000001" fill="none"/>
<path d="M233.0 255.2 L233.0 272.4 L422.7 372.5 L451.5 359.6 L450.5 342.7" stroke="#7c7c7c" stroke-width="0.9500000000000001" fill="none"/>
<path d="M422.7 355.6 L422.7 372.5" stroke="#7c7c7c" stroke-width="0.9500000000000001" fill="none"/>
<path d="M270.2 259.7 L410.0 331.0" stroke="#ff2020" stroke-width="0.9" fill="none"/>
<path d="M268.7 263.5 L409.5 337.1" stroke="#ff2020" stroke-width="0.9" fill="none"/>
<path d="M251.6 264.6 L338.8 310.8 L342.8 313.8 L352.7 311.3 L447.6 362.0" stroke="#e020e0" stroke-width="0.9" fill="none"/>
<path d="M246.4 268.6 L331.9 313.8 L334.9 316.8 L339.8 318.8 L433.6 368.9" stroke="#e020e0" stroke-width="0.9" fill="none"/>
<path d="M332.9 319.8 L349.8 329.7 L426.7 370.5" stroke="#e020e0" stroke-width="0.9" fill="none"/>
<path d="M340.0 314.5 L440.6 364.6" stroke="#e020e0" stroke-width="0.9" fill="none"/>
<path d="M255.7 231.1 L260.5 228.4 L272.7 234.8 L267.9 236.9 Z" stroke="#ff2020" stroke-width="0.9" fill="#ff2020"/>
<path d="M255.7 231.1 L255.7 256.1" stroke="#ff2020" stroke-width="0.9" fill="none"/>
<path d="M272.7 234.8 L272.7 259.8" stroke="#ff2020" stroke-width="0.9" fill="none"/>
<path d="M267.9 236.9 L267.9 261.9" stroke="#ff2020" stroke-width="0.9" fill="none"/>
<path d="M264.2 232.9 L264.2 257.9" stroke="#ff2020" stroke-width="0.9" fill="none"/>
<path d="M255.7 256.1 L261.5 253.4 L272.7 259.8 L267.9 261.9 Z" stroke="#ff2020" stroke-width="0.9" fill="#ff2020"/>
<path d="M408.3 312.1 L413.1 309.4 L425.0 316.3 L420.8 318.7 Z" stroke="#ff2020" stroke-width="0.9" fill="#ff2020"/>
<path d="M408.3 312.1 L408.3 337.1" stroke="#ff2020" stroke-width="0.9" fill="none"/>
<path d="M425.0 316.3 L425.0 341.3" stroke="#ff2020" stroke-width="0.9" fill="none"/>
<path d="M420.8 318.7 L420.8 343.7" stroke="#ff2020" stroke-width="0.9" fill="none"/>
<path d="M416.6 314.2 L416.6 339.2" stroke="#ff2020" stroke-width="0.9" fill="none"/>
<path d="M408.3 337.1 L414.1 334.4 L425.0 341.3 L420.8 343.7 Z" stroke="#ff2020" stroke-width="0.9" fill="#ff2020"/>
<ellipse cx="251.9" cy="251.3" rx="3.5" ry="1.8" stroke="#ff2020" stroke-width="0.8" fill="none"/>
<ellipse cx="430.4" cy="346" rx="4.2" ry="1.9" stroke="#ff2020" stroke-width="0.8" fill="none"/>
<text x="304" y="285" font-size="4.4" fill="#b4b4b4" font-family="Liberation Sans" transform="rotate(28 304 285)">HEIZRO · HEIZ · REGU</text>
<text x="356" y="296" font-size="4.2" fill="#b8b8b8" font-family="Liberation Sans" transform="rotate(27 356 296)">HEIZROHR</text>
<text x="359" y="302" font-size="4.2" fill="#b8b8b8" font-family="Liberation Sans" transform="rotate(27 359 302)">REG</text>
<ellipse cx="244.2" cy="267.1" rx="2.5" ry="1.4" stroke="#10ff10" stroke-width="2.1" fill="none"/>
<ellipse cx="251.6" cy="264.6" rx="2.5" ry="1.4" stroke="#10ff10" stroke-width="2.1" fill="none"/>
<ellipse cx="426.7" cy="370.5" rx="2.5" ry="1.4" stroke="#10ff10" stroke-width="2.1" fill="none"/>
<ellipse cx="433.6" cy="367.6" rx="2.5" ry="1.4" stroke="#10ff10" stroke-width="2.1" fill="none"/>
<ellipse cx="440.6" cy="364.6" rx="2.5" ry="1.4" stroke="#10ff10" stroke-width="2.1" fill="none"/>
<ellipse cx="447.6" cy="362" rx="2.5" ry="1.4" stroke="#10ff10" stroke-width="2.1" fill="none"/>
<path d="M276.4 282.6 L281.0 281.0 L291.1 283.3 L293.8 288.5 L285.5 289.7 L278.4 286.5 Z" fill="#10ff10" stroke="#10ff10" stroke-width="1.2" stroke-linejoin="round"/>
<ellipse cx="284.8" cy="285.5" rx="2.6" ry="1.3" stroke="#000" stroke-width="0" fill="#000" transform="rotate(15 284.8 285.5)"/>
<path d="M398.8 347.7 L403.4 346.1 L413.5 348.4 L416.2 353.6 L407.9 354.8 L400.8 351.6 Z" fill="#10ff10" stroke="#10ff10" stroke-width="1.2" stroke-linejoin="round"/>
<ellipse cx="407.2" cy="350.6" rx="2.6" ry="1.3" stroke="#000" stroke-width="0" fill="#000" transform="rotate(15 407.2 350.6)"/>
<path d="M350.0 307.0 L356.0 305.0" stroke="#d8d8d8" stroke-width="0.6" fill="none"/>
<path d="M486.1 269.2 L519.6 287.0" stroke="#d8d8d8" stroke-width="0.9" fill="none"/>
<path d="M486.1 286.0 L520.9 271.1" stroke="#d8d8d8" stroke-width="0.9" fill="none"/>
<rect x="501.3" y="276.3" width="4" height="4" stroke="#e0e0e0" stroke-width="0.8" fill="#000"/>
<path d="M289.8 386.8 L299.4 382.0 L316.7 389.9 L306.5 398.0 Z" stroke="#7c7c7c" stroke-width="0.8" fill="none"/>
<path d="M290.5 387.8 L304.0 395.5" stroke="#20c0a0" stroke-width="1.6" fill="none"/>
<path d="M300.0 382.8 L315.5 390.5" stroke="#20c0a0" stroke-width="1.6" fill="none"/>
<path d="M293.1 389.0 L302.9 383.6" stroke="#7c7c7c" stroke-width="0.75" fill="none"/>
<path d="M296.5 391.3 L306.3 385.2" stroke="#7c7c7c" stroke-width="0.75" fill="none"/>
<path d="M299.8 393.5 L309.8 386.7" stroke="#7c7c7c" stroke-width="0.75" fill="none"/>
<path d="M303.2 395.8 L313.2 388.3" stroke="#7c7c7c" stroke-width="0.75" fill="none"/>
<path d="M295.0 385.5 L311.0 393.5" stroke="#a03030" stroke-width="0.6" fill="none"/>
<path d="M59.9 369.2 L61.5 403.0" stroke="#d8d8d8" stroke-width="0.9" fill="none"/>
<path d="M61.5 403.0 L40.0 393.5" stroke="#d8d8d8" stroke-width="0.9" fill="none"/>
<path d="M61.5 403.0 L92.0 393.5" stroke="#d8d8d8" stroke-width="0.9" fill="none"/>
<path d="M34.9 392.0 L42.4 392.5 L38.5 397.5 Z" stroke="#d8d8d8" stroke-width="0.8" fill="none"/>
<path d="M85.7 393.0 L94.2 391.8 L90.5 397.5 Z" stroke="#d8d8d8" stroke-width="0.8" fill="none"/>
<path d="M56.8 355.5 L63.0 355.5 L56.8 364.3 L63.2 364.3" stroke="#d8d8d8" stroke-width="0.9" fill="none"/>
<path d="M24.3 383.5 L27.6 388.2 L31.0 383.5" stroke="#d8d8d8" stroke-width="0.9" fill="none"/>
<path d="M27.6 388.2 L27.6 392.8" stroke="#d8d8d8" stroke-width="0.9" fill="none"/>
<path d="M101.0 384.5 L108.2 392.8" stroke="#d8d8d8" stroke-width="0.9" fill="none"/>
<path d="M108.2 384.5 L101.0 392.8" stroke="#d8d8d8" stroke-width="0.9" fill="none"/></svg>
</body></html>
